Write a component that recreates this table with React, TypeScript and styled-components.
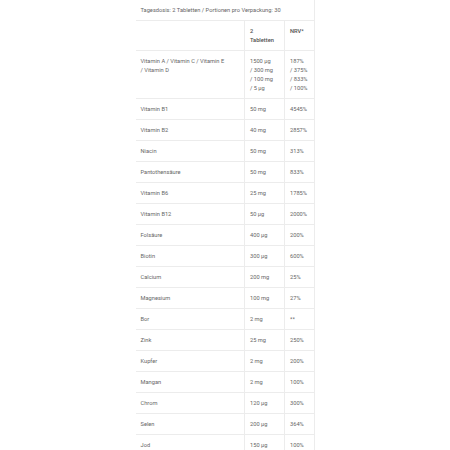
import React from "react";
import styled, { createGlobalStyle } from "styled-components";

const Global = createGlobalStyle`
  html, body { margin: 0; padding: 0; background: #ffffff; }
  body { font-family: Roboto, "Liberation Sans", Arial, sans-serif; }
`;

const Wrap = styled.div`
  width: 179px;
  margin: 0 auto;
`;

const Table = styled.table`
  width: 100%;
  border-collapse: collapse;
  table-layout: fixed;
  font-family: Roboto, "Liberation Sans", Arial, sans-serif;
  font-size: 5.7px;
  line-height: 9px;
  color: #666666;
`;

const Cell = styled.td<{ $head?: boolean }>`
  padding: 5.5px 5px 5.5px 5px;
  vertical-align: top;
  border-bottom: 1px solid #ececec;
  border-right: 1px solid #ececec;
  font-weight: ${(p) => (p.$head ? 500 : 400)};
  color: ${(p) => (p.$head ? "#4f4f4f" : "#666666")};
  text-align: left;
  white-space: normal;
`;

const rows: [string, string, string][] = [
  ["Vitamin B1", "50 mg", "4545%"],
  ["Vitamin B2", "40 mg", "2857%"],
  ["Niacin", "50 mg", "313%"],
  ["Pantothensäure", "50 mg", "833%"],
  ["Vitamin B6", "25 mg", "1785%"],
  ["Vitamin B12", "50 µg", "2000%"],
  ["Folsäure", "400 µg", "200%"],
  ["Biotin", "300 µg", "600%"],
  ["Calcium", "200 mg", "25%"],
  ["Magnesium", "100 mg", "27%"],
  ["Bor", "2 mg", "**"],
  ["Zink", "25 mg", "250%"],
  ["Kupfer", "2 mg", "200%"],
  ["Mangan", "2 mg", "100%"],
  ["Chrom", "120 µg", "300%"],
  ["Selen", "200 µg", "364%"],
  ["Jod", "150 µg", "100%"],
];

export default function App() {
  return (
    <>
      <Global />
      <Wrap>
        <Table>
          <colgroup>
            <col style={{ width: "109px" }} />
            <col style={{ width: "40px" }} />
            <col style={{ width: "30px" }} />
          </colgroup>
          <tbody>
            <tr>
              <Cell colSpan={3}>Tagesdosis: 2 Tabletten / Portionen pro Verpackung: 30</Cell>
            </tr>
            <tr>
              <Cell></Cell>
              <Cell $head>
                2
                <br />
                Tabletten
              </Cell>
              <Cell $head>NRV*</Cell>
            </tr>
            <tr>
              <Cell>{"Vitamin A / Vitamin C / Vitamin E /\u00a0Vitamin D"}</Cell>
              <Cell>
                1500 µg
                <br />/ 300 mg
                <br />/ 100 mg
                <br />/ 5 µg
              </Cell>
              <Cell>
                187%
                <br />/ 375%
                <br />/ 833%
                <br />/ 100%
              </Cell>
            </tr>
            {rows.map(([n, a, v]) => (
              <tr key={n}>
                <Cell>{n}</Cell>
                <Cell>{a}</Cell>
                <Cell>{v}</Cell>
              </tr>
            ))}
          </tbody>
        </Table>
      </Wrap>
    </>
  );
}
